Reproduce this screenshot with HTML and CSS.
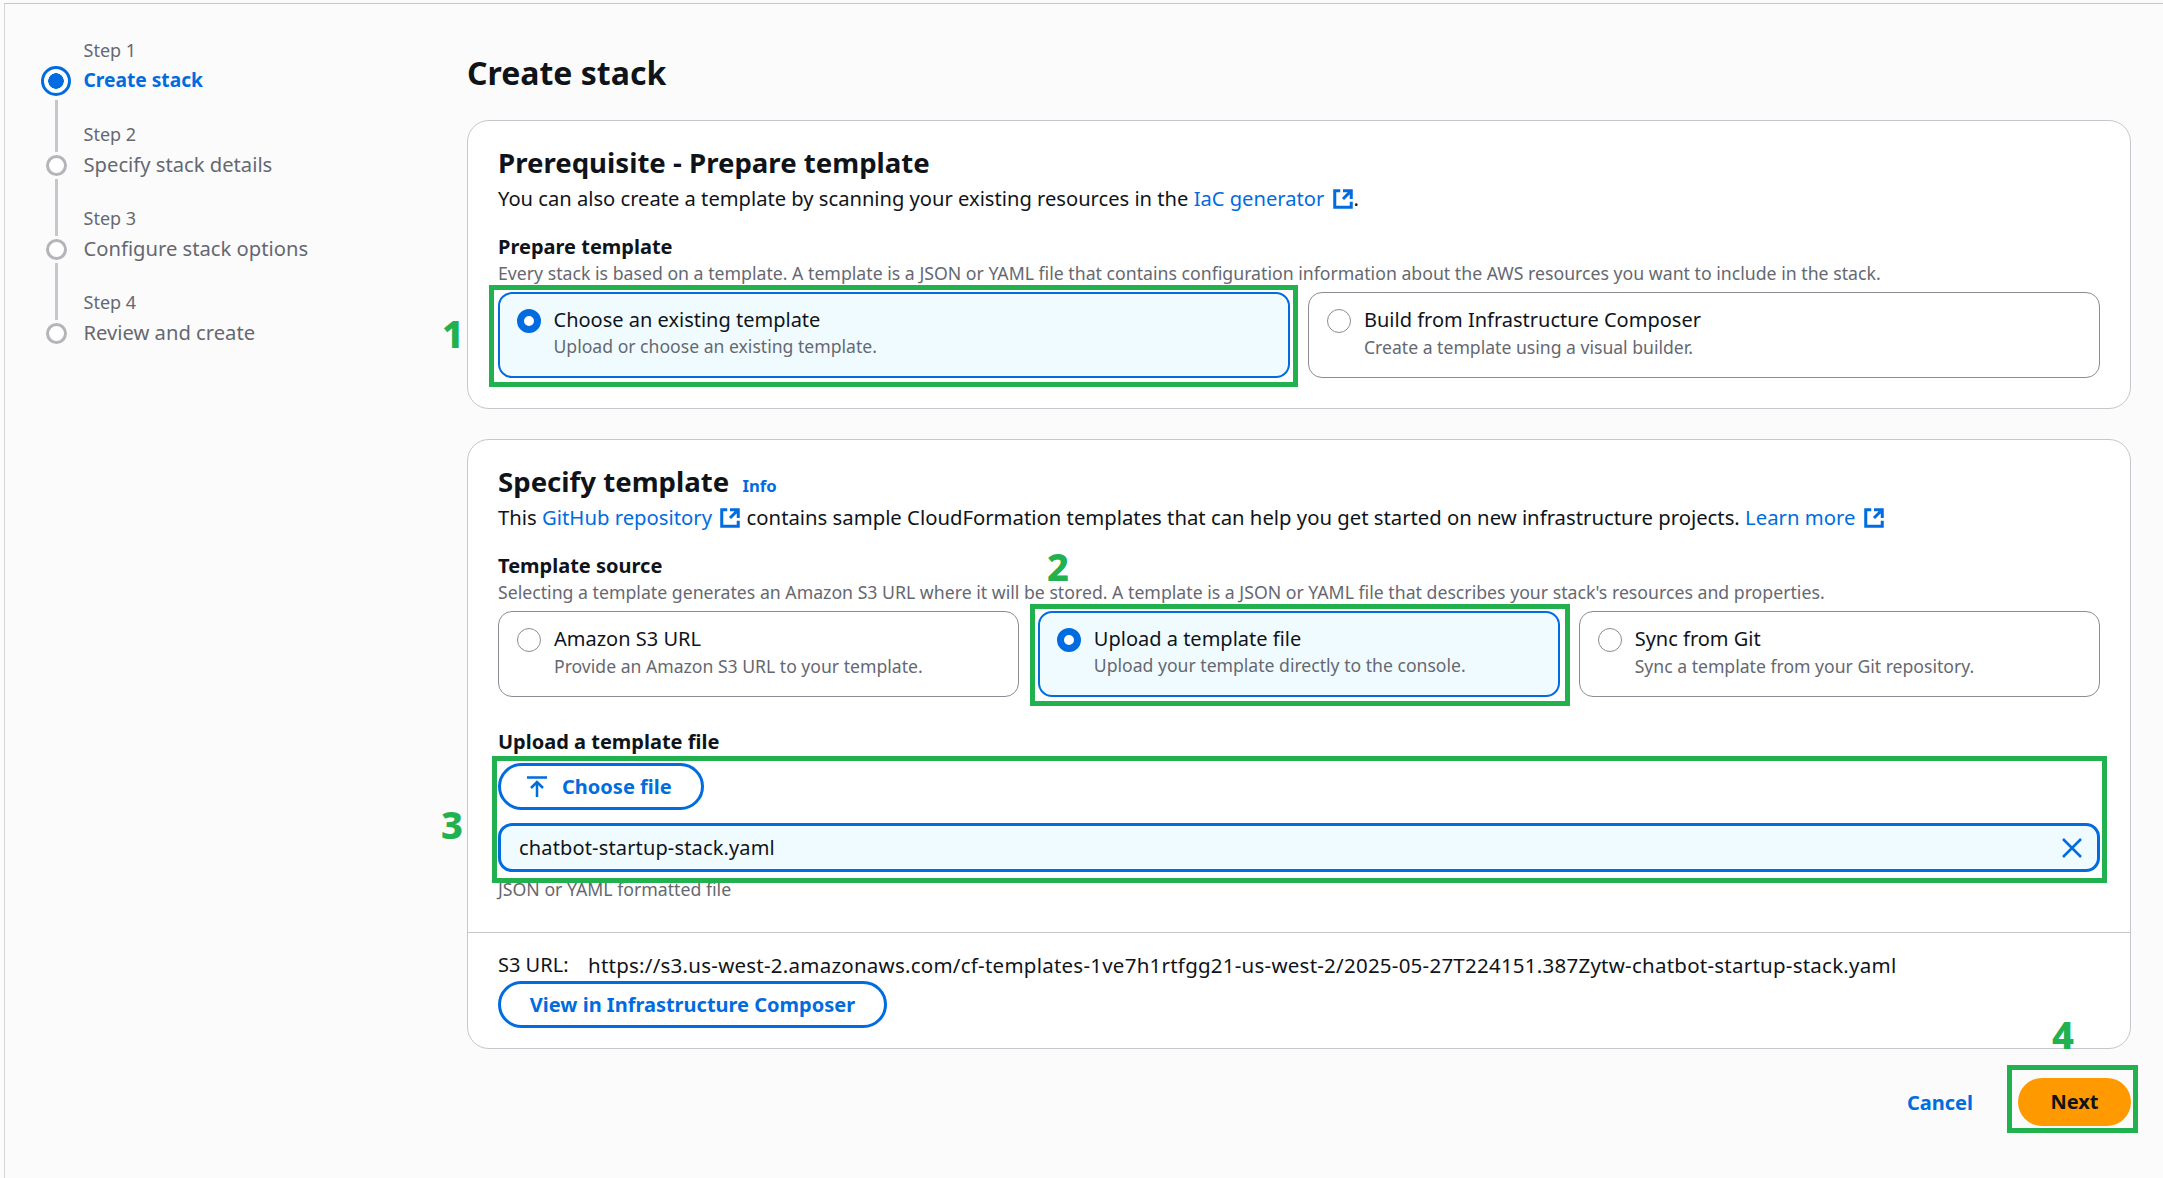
FILE: index.html
```html
<!DOCTYPE html>
<html lang="en">
<head>
<meta charset="utf-8">
<title>Create stack</title>
<link rel="stylesheet" href="styles.css">
</head>
<body>
<div class="page">
  <nav class="wizard">
    <div class="rail">
      <span class="dot dot-active"></span><span class="line line-first"></span>
      <span class="dot"></span><span class="line"></span>
      <span class="dot"></span><span class="line"></span>
      <span class="dot"></span>
    </div>
    <ol class="steps">
      <li class="step"><span class="step-num">Step 1</span><span class="step-name step-current">Create stack</span></li>
      <li class="step"><span class="step-num">Step 2</span><span class="step-name">Specify stack details</span></li>
      <li class="step"><span class="step-num">Step 3</span><span class="step-name">Configure stack options</span></li>
      <li class="step"><span class="step-num">Step 4</span><span class="step-name">Review and create</span></li>
    </ol>
  </nav>
  <main class="main">
    <h1 class="title">Create stack</h1>

    <section class="card card-first">
      <h2 class="card-title">Prerequisite - Prepare template</h2>
      <p class="card-desc">You can also create a template by scanning your existing resources in the <a class="link">IaC generator <svg class="ext" viewBox="0 0 16 16"><path d="M14 8V2H8M14 2 8 8"/><path d="M6 2H2v12h12v-4"/></svg></a>.</p>
      <div class="label label-a">Prepare template</div>
      <div class="hint">Every stack is based on a template. A template is a JSON or YAML file that contains configuration information about the AWS resources you want to include in the stack.</div>
      <div class="tiles tiles-2">
        <div class="tile tile-on"><span class="radio radio-on"></span><div class="tile-text"><div class="tile-title">Choose an existing template</div><div class="tile-desc">Upload or choose an existing template.</div></div></div>
        <div class="tile"><span class="radio"></span><div class="tile-text"><div class="tile-title">Build from Infrastructure Composer</div><div class="tile-desc">Create a template using a visual builder.</div></div></div>
      </div>
    </section>

    <section class="card card-second">
      <div class="card-body">
        <h2 class="card-title">Specify template <a class="info">Info</a></h2>
        <p class="card-desc">This <a class="link">GitHub repository <svg class="ext" viewBox="0 0 16 16"><path d="M14 8V2H8M14 2 8 8"/><path d="M6 2H2v12h12v-4"/></svg></a> contains sample CloudFormation templates that can help you get started on new infrastructure projects. <a class="link">Learn more <svg class="ext" viewBox="0 0 16 16"><path d="M14 8V2H8M14 2 8 8"/><path d="M6 2H2v12h12v-4"/></svg></a></p>
        <div class="label label-a">Template source</div>
        <div class="hint">Selecting a template generates an Amazon S3 URL where it will be stored. A template is a JSON or YAML file that describes your stack's resources and properties.</div>
        <div class="tiles tiles-3">
          <div class="tile"><span class="radio"></span><div class="tile-text"><div class="tile-title">Amazon S3 URL</div><div class="tile-desc">Provide an Amazon S3 URL to your template.</div></div></div>
          <div class="tile tile-on"><span class="radio radio-on"></span><div class="tile-text"><div class="tile-title">Upload a template file</div><div class="tile-desc">Upload your template directly to the console.</div></div></div>
          <div class="tile"><span class="radio"></span><div class="tile-text"><div class="tile-title">Sync from Git</div><div class="tile-desc">Sync a template from your Git repository.</div></div></div>
        </div>
        <div class="label label-b">Upload a template file</div>
        <button class="btn btn-file"><svg class="upload" viewBox="0 0 20 22"><path d="M0 1.5h20M10 21V6M4 12l6-6 6 6"/></svg>Choose file</button>
        <div class="file-input"><span class="file-name">chatbot-startup-stack.yaml</span><svg class="close" viewBox="0 0 20 20"><path d="M1 1l18 18M19 1 1 19"/></svg></div>
        <div class="hint hint-c">JSON or YAML formatted file</div>
      </div>
      <div class="card-foot">
        <div class="s3"><span class="s3-key">S3 URL:</span><span class="s3-url">https://s3.us-west-2.amazonaws.com/cf-templates-1ve7h1rtfgg21-us-west-2/2025-05-27T224151.387Zytw-chatbot-startup-stack.yaml</span></div>
        <button class="btn btn-view">View in Infrastructure Composer</button>
      </div>
    </section>

    <div class="actions">
      <a class="cancel">Cancel</a>
      <button class="next">Next</button>
    </div>
  </main>
</div>

<div class="mark box-1"></div>
<div class="mark box-2"></div>
<div class="mark box-3"></div>
<div class="mark box-4"></div>
<span class="num num-1">1</span>
<span class="num num-2">2</span>
<span class="num num-3">3</span>
<span class="num num-4">4</span>
</body>
</html>
```
FILE: styles.css
```css
* { box-sizing: border-box; }
html, body { margin: 0; height: 100%; }
body {
  position: relative;
  background: #fbfbfb;
  color: #0f141a;
  font-family: "Noto Sans", "Open Sans", sans-serif;
  font-size: 20px;
  overflow: hidden;
}
.page {
  margin: 3px 0 0 4px;
  height: 1175px;
  border-top: 1px solid #c6c6cd;
  border-left: 1px solid #d5d5da;
  display: grid;
  grid-template-columns: 462px 1fr;
}
.wizard {
  display: grid;
  grid-template-columns: 30px 1fr;
  column-gap: 12.5px;
  padding: 33.5px 0 0 36px;
  align-content: start;
}
.rail {
  display: flex;
  flex-direction: column;
  align-items: center;
  padding-top: 28.5px;
}
.dot {
  width: 21px;
  height: 21px;
  border: 3px solid #b4b4bb;
  border-radius: 50%;
  background: #fff;
  flex: none;
}
.dot-active {
  width: 30px;
  height: 30px;
  border: 3.5px solid #006ce0;
  background: radial-gradient(circle, #006ce0 0 7.5px, #fff 8px);
}
.line {
  width: 3px;
  height: 57px;
  margin: 3px 0;
  background: #c6c6cd;
}
.line-first { height: 52px; margin: 4px 0 2.5px; }
.steps { list-style: none; margin: 0; padding: 0; }
.step { height: 84px; display: flex; flex-direction: column; }
.step-num { font-size: 18px; line-height: 24px; color: #656871; margin-bottom: 6px; }
.step-name { font-size: 20.2px; line-height: 24px; color: #656871; }
.step-current { color: #006ce0; font-weight: 700; font-size: 19.2px; }

.main { padding: 47px 32px 0 0; }
.title { margin: 0 0 25px; font-size: 32px; line-height: 44px; font-weight: 700; }
.card {
  background: #fff;
  border: 1px solid #c6c6cd;
  border-radius: 22px;
  margin-bottom: 31px;
}
.card-second { margin-bottom: 29px; }
.card-first { padding: 21px 30px 30px; margin-bottom: 30px; }
.card-body { padding: 21px 30px 32px; }
.card-title { margin: 0; font-size: 27.6px; line-height: 40px; font-weight: 700; }
.card-desc { margin: 4px 0 0; font-size: 20.25px; line-height: 24px; height: 24px; }
.card-first .card-desc { font-size: 20.15px; }
.card-second .card-desc { font-size: 20.3px; }
.link { color: #006ce0; }
.info { color: #006ce0; font-size: 16.7px; line-height: 1; font-weight: 700; margin-left: 6px; }
.ext {
  width: 22px;
  height: 22px;
  vertical-align: -4px;
  margin-left: 2px;
  fill: none;
  stroke: #006ce0;
  stroke-width: 2.2;
}
.label { font-size: 20px; line-height: 24px; font-weight: 700; }
.label-a { margin-top: 25px; }
.card-second .label-a { margin-top: 25px; }
.label-b { margin-top: 33px; }
.hint { font-size: 17.7px; line-height: 22px; color: #656871; margin-top: 3px; }
.hint-c { margin-top: 6px; }
.tiles { display: grid; margin-top: 8px; }
.tiles-2 { grid-template-columns: 1fr 1fr; column-gap: 18px; }
.tiles-3 { grid-template-columns: 1fr 1fr 1fr; column-gap: 19px; }
.tile {
  height: 86px;
  border: 1px solid #8c8c94;
  border-radius: 14px;
  display: flex;
  padding: 14px 18px 0 18px;
  gap: 13px;
}
.tile-on {
  border: 2.5px solid #006ce0;
  background: #f0fbff;
  padding: 12.5px 16.5px 0 16.5px;
}
.radio {
  width: 24px;
  height: 24px;
  flex: none;
  margin-top: 2px;
  border: 1.5px solid #8c8c94;
  border-radius: 50%;
  background: #fff;
}
.radio-on { border: 7px solid #006ce0; }
.tile-title { font-size: 20px; line-height: 26px; }
.tile-desc { font-size: 17.6px; line-height: 22px; color: #656871; margin-top: 2.5px; }

.btn {
  display: flex;
  align-items: center;
  background: #fff;
  border: 3px solid #006ce0;
  border-radius: 24px;
  color: #006ce0;
  font: 700 20px/24px "Noto Sans", sans-serif;
  cursor: pointer;
}
.btn-file { margin-top: 9px; height: 47px; width: 206px; padding: 0 0 0 26px; gap: 15px; }
.upload { width: 20px; height: 22px; fill: none; stroke: #006ce0; stroke-width: 2.5; }
.file-input {
  margin-top: 13px;
  height: 49px;
  border: 3px solid #006ce0;
  border-radius: 14px;
  background: #f0fbff;
  display: flex;
  align-items: center;
  justify-content: space-between;
  padding: 0 15px 0 18px;
  line-height: 24px;
}
.file-name { letter-spacing: 0.15px; }
.close { width: 20px; height: 20px; fill: none; stroke: #006ce0; stroke-width: 2.5; }
.card-foot { border-top: 1px solid #c6c6cd; padding: 20px 30px 20px; }
.s3 { line-height: 24px; display: flex; }
.s3-key { width: 90px; flex: none; }
.s3-url { font-size: 20.5px; letter-spacing: 0.24px; }
.btn-view { margin-top: 4px; height: 47px; width: 389px; justify-content: center; }

.actions { display: flex; justify-content: flex-end; align-items: center; gap: 45px; }
.cancel { color: #006ce0; font-weight: 700; }
.next {
  width: 113px;
  height: 48px;
  border: 0;
  border-radius: 24px;
  background: #ff9900;
  color: #0f141a;
  font: 700 20px/24px "Noto Sans", sans-serif;
}

.mark { position: absolute; border: 5px solid #21b14f; }
.box-1 { left: 489px; top: 285px; width: 809px; height: 102px; }
.box-2 { left: 1030px; top: 604px; width: 540px; height: 102px; }
.box-3 { left: 492px; top: 756px; width: 1615px; height: 127px; }
.box-4 { left: 2007px; top: 1065px; width: 131px; height: 68px; }
.num { position: absolute; color: #21b14f; font-size: 38px; line-height: 40px; font-weight: 800; }
.num-1 { left: 442px; top: 313px; }
.num-2 { left: 1047px; top: 546px; }
.num-3 { left: 441px; top: 804px; }
.num-4 { left: 2052px; top: 1014px; }
```
